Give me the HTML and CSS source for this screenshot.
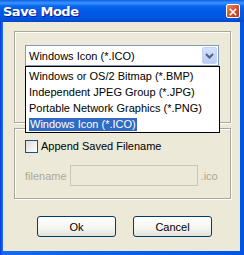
FILE: index.html
```html
<!DOCTYPE html>
<html>
<head>
<meta charset="utf-8">
<title>Save Mode</title>
<link rel="stylesheet" href="styles.css">
</head>
<body>
<div class="window">
    <div class="titlebar">
        <span class="title">Save Mode</span>
        <span class="close">
            <svg width="14" height="14" viewBox="0 0 14 14">
                <path d="M4 4 L10 10 M10 4 L4 10" stroke="#fff" stroke-width="1.8" stroke-linecap="square"/>
            </svg>
        </span>
    </div>
    <div class="client">
        <div class="group group1">
            <div class="combo">
                <span class="combo-text">Windows Icon (*.ICO)</span>
                <span class="combo-btn">
                    <svg width="9" height="6" viewBox="0 0 9 6">
                        <path d="M1 1 L4.5 4.5 L8 1" fill="none" stroke="#4D6185" stroke-width="2"/>
                    </svg>
                </span>
                <ul class="list">
                    <li>Windows or OS/2 Bitmap (*.BMP)</li>
                    <li>Independent JPEG Group (*.JPG)</li>
                    <li>Portable Network Graphics (*.PNG)</li>
                    <li><span class="sel">Windows Icon (*.ICO)</span></li>
                </ul>
            </div>
        </div>
        <div class="group group2">
            <label class="check"><span class="box"></span>Append Saved Filename</label>
            <div class="namerow">
                <span class="dim">filename</span>
                <span class="field"></span>
                <span class="dim">.ico</span>
            </div>
        </div>
        <div class="buttons">
            <button class="btn">Ok</button>
            <button class="btn">Cancel</button>
        </div>
    </div>
</div>
</body>
</html>
```

FILE: styles.css
```css
*{
    margin:0;
    padding:0;
    list-style:none;
    box-sizing:border-box;
}
body{
    font-family:"Liberation Sans", Arial, sans-serif;
    font-size:11px;
    color:#000;
    background:#fff;
}
.window{
    width:244px;
    height:255px;
    padding:0 4px 4px 3px;
    background:linear-gradient(to right, #0831D9, #166AEE 2px, #0055E5 100%);
    display:flex;
    flex-direction:column;
}
.titlebar{
    height:22px;
    margin:0 -4px 0 -3px;
    padding:0 4px 0 3px;
    display:flex;
    align-items:center;
    justify-content:space-between;
    background:linear-gradient(#0A5FE6, #3D95FF 3px, #0866F0 6px, #0058E6 12px, #0056E2 18px, #0046C8);
}
.title{
    color:#fff;
    font-weight:bold;
    font-size:13px;
    font-family:"DejaVu Sans", sans-serif;
    letter-spacing:-0.5px;
    text-shadow:1px 1px 0 #0A1E8C;
}
.close{
    width:14px;
    height:14px;
    border:1px solid #fff;
    border-radius:2px;
    background:linear-gradient(135deg, #E88A6B, #D4512C 50%, #C2361A);
    display:flex;
}
.client{
    flex:1;
    background:#ECE9D8;
    padding:9px 9px 0 11px;
}
.group{
    border:1px solid #ACA899;
    box-shadow:inset 1px 1px 0 #fff, 1px 1px 0 #fff;
}
.group1{
    height:92px;
    padding:13px 11px 0 10px;
}
.group2{
    height:71px;
    margin-top:5px;
    padding:10px 10px 0 10px;
}
.combo{
    position:relative;
    height:21px;
    background:#fff;
    border:1px solid #7F9DB9;
    display:flex;
    align-items:center;
    justify-content:space-between;
    padding-left:3px;
}
.combo-btn{
    width:15px;
    height:17px;
    margin-right:1px;
    background:linear-gradient(#D4E1FC, #B9CDF7);
    border:1px solid #C3D3FD;
    border-radius:2px;
    display:flex;
    align-items:center;
    justify-content:center;
}
.list{
    position:absolute;
    left:-1px;
    right:-2px;
    top:20px;
    background:#fff;
    border:1px solid #000;
    padding:1px 0 0 2px;
    white-space:nowrap;
}
.list li{
    height:16px;
    line-height:16px;
    padding-left:1px;
}
.sel{
    background:#316AC5;
    color:#fff;
    padding:0 1px;
    display:inline-block;
    line-height:13px;
}
.check{
    display:flex;
    align-items:center;
    gap:3px;
    height:14px;
}
.box{
    width:13px;
    height:13px;
    border:1px solid #1C5180;
    background:linear-gradient(135deg, #DCDCD7, #fff);
}
.namerow{
    margin-top:12px;
    display:flex;
    align-items:center;
    gap:3px;
}
.dim{
    color:#ACA899;
}
.field{
    width:128px;
    height:21px;
    border:1px solid #C9C7BA;
    background:#ECE9D8;
}
.buttons{
    display:flex;
    gap:17px;
    padding:17px 0 0 23px;
}
.btn{
    width:79px;
    height:21px;
    border:1px solid #003C74;
    border-radius:3px;
    background:linear-gradient(#fff, #F4F4F0 60%, #E3E2DA);
    font-family:"Liberation Sans", sans-serif;
    font-size:11px;
    color:#000;
}
```
